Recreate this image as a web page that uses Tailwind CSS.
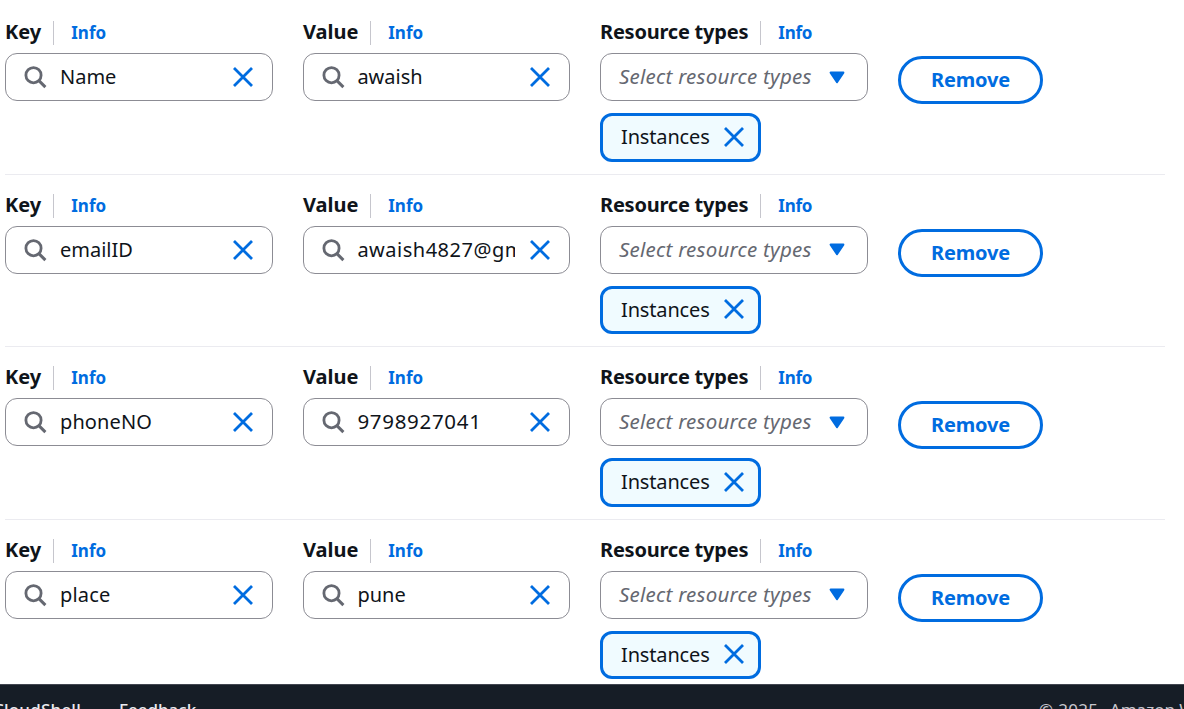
<!DOCTYPE html>
<html lang="en">
<head>
<meta charset="utf-8">
<title>Tags</title>
<script src="https://cdn.jsdelivr.net/npm/@tailwindcss/browser@4"></script>
</head>
<body class="w-[1184px] h-[709px] overflow-hidden bg-white text-[#0f141a] font-['Noto_Sans',sans-serif] flex flex-col">
<svg class="hidden">
  <symbol id="search" viewBox="0 0 24 24"><circle cx="9.5" cy="10.2" r="7.6" fill="none" stroke="#656871" stroke-width="2.8"/><path d="M14.9 15.6 21.4 22.1" stroke="#656871" stroke-width="3" fill="none"/></symbol>
  <symbol id="close" viewBox="0 0 20 20"><path d="M1 1 19 19M19 1 1 19" stroke="#006ce0" stroke-width="2.8" fill="none"/></symbol>
  <symbol id="caret" viewBox="0 0 16 13"><path d="M1.6 1.6H14.4L8 11.2Z" fill="#006ce0" stroke="#006ce0" stroke-width="2" stroke-linejoin="round"/></symbol>
</svg>
<main id="rows" class="h-[684px] shrink-0 pt-px overflow-hidden"></main>
<footer class="h-[25px] shrink-0 overflow-hidden bg-[#161d26] border-t border-[#424650] flex justify-between text-[17px] leading-6 whitespace-nowrap pt-[13px]">
  <div class="flex gap-[38px] -ml-[7px] text-[#ebebf0] font-medium"><span class="w-[88px] tracking-[0.2px]">CloudShell</span><span>Feedback</span></div>
  <div class="w-[145px] text-[#c6c6cd] overflow-hidden whitespace-pre"><span class="mr-[2px] tracking-[0.3px]">© 2025, </span>Amazon Web Services</div>
</footer>
<script>
const info = (label, width) => `
  <div class="flex items-center h-6 whitespace-nowrap">
    <span class="${width} h-6 leading-[22px] text-[20px] font-bold border-r border-[#c6c6cd]">${label}</span>
    <a class="ml-[17.25px] text-[17px] leading-6 font-bold text-[#006ce0]">Info</a>
  </div>`;
const field = (value, type, gap) => `
  <div class="mt-2 h-12 rounded-[12px] border border-[#8c8c94] flex items-center pl-[18px] pr-[19px]">
    <svg class="size-6 shrink-0"><use href="#search"/></svg>
    <span class="${gap} w-[158px] ${type} shrink-0 overflow-hidden whitespace-nowrap leading-7">${value}</span>
    <svg class="ml-auto size-5 shrink-0"><use href="#close"/></svg>
  </div>`;
const data = [
  ["Name","awaish","h-[173px] border-transparent","text-[20px]","text-[20px]","h-[49px] pb-px","mb-0"],
  ["emailID","awaish4827@gmail.com","h-[172px] border-[#ebebf0]","text-[20px]","text-[20px] tracking-[0.5px]","h-12","mb-[2px]"],
  ["phoneNO","9798927041","h-[173px] border-[#ebebf0]","text-[20px] tracking-[0.1px]","text-[20.5px] tracking-[0.7px] mb-[2px]","h-[49px] pb-px","mb-0"],
  ["place","pune","h-[172px] border-[#ebebf0]","text-[20px] tracking-[0.2px]","text-[20px]","h-12","mb-[2px]"]
];
document.getElementById("rows").innerHTML = data.map(([key, value, cls, keyType, valueType, tag, lift]) => `
  <section class="${cls} ml-[5px] w-[1160px] border-t pt-[19px] flex items-start">
    <div class="w-[268px]">${info("Key","w-[49px]")}${field(key, keyType, "ml-[12px]")}</div>
    <div class="ml-[30px] w-[267px]">${info("Value","w-[68px]")}${field(value, valueType, "ml-[11.4px]")}</div>
    <div class="ml-[30px] w-[268px]"><div class="tracking-[-0.22px]">${info("Resource types","w-[161px]")}</div>
      <div class="mt-2 h-12 rounded-[12px] border border-[#8c8c94] flex items-center pl-[18px]">
        <span class="mb-[2px] w-[193px] whitespace-nowrap italic text-[20.5px] tracking-[0.23px] leading-7 text-[#656871]">Select resource types</span>
        <svg class="ml-[17px] ${lift} w-4 h-[13px]"><use href="#caret"/></svg>
      </div>
      <div class="mt-3 w-[161px] ${tag} rounded-[12px] border-3 border-[#006ce0] bg-[#f0fbff] flex items-center pl-[18px]">
        <span class="w-[89px] whitespace-nowrap text-[20px] tracking-[-0.15px] leading-7">Instances</span>
        <svg class="ml-[14px] ${lift} size-5"><use href="#close"/></svg>
      </div>
    </div>
    <button class="ml-[30px] mt-[35px] w-[145px] h-12 rounded-full border-3 border-[#006ce0] text-[#006ce0] font-bold text-[20px] tracking-[-0.15px] leading-6">Remove</button>
  </section>`).join("");
</script>
</body>
</html>
